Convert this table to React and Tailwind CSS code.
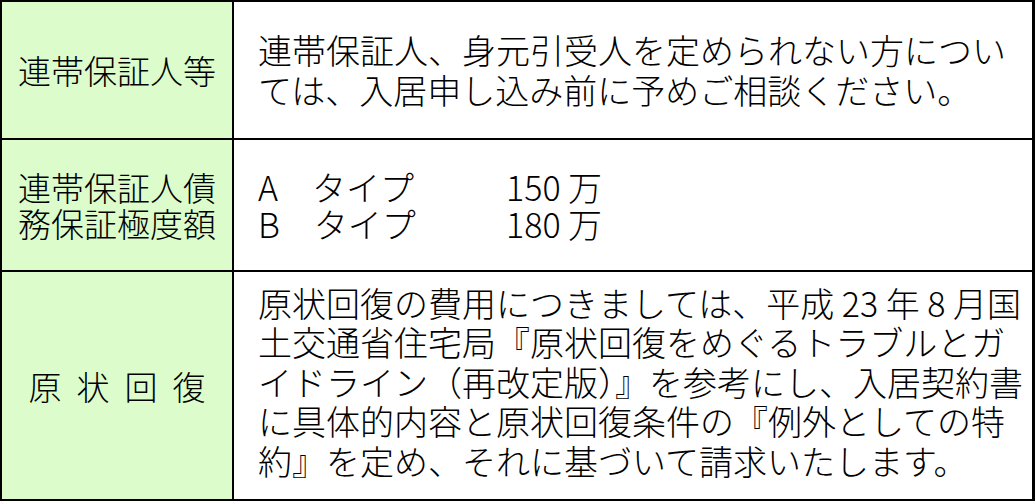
import React from "react";

const font = {
  fontFamily: '"Noto Sans CJK JP", "Noto Sans", sans-serif',
};

const Label = ({ children, className = "" }) => (
  <div
    className={`flex items-center justify-center bg-[#dcfccc] border-r-2 border-black text-[33px] font-light leading-[36px] text-black text-center ${className}`}
  >
    {children}
  </div>
);

const App = () => {
  return (
    <div
      className="w-[1035px] h-[501px] bg-white border-t-2 border-l-2 border-b-2 border-r-[3px] border-black flex flex-col"
      style={font}
    >
      {/* row 1 */}
      <div className="flex h-[138px] border-b-2 border-black">
        <Label className="w-[232px]">連帯保証人等</Label>
        <div className="flex-1 flex items-center pl-6 text-[34px] font-light leading-[40px] text-black whitespace-nowrap">
          <p>
            連帯保証人、身元引受人を定められない方につい
            <br />
            ては、入居申し込み前に予めご相談ください。
          </p>
        </div>
      </div>

      {/* row 2 */}
      <div className="flex h-[132px] border-b-2 border-black">
        <Label className="w-[232px]">
          <p>
            連帯保証人債
            <br />
            務保証極度額
          </p>
        </Label>
        <div className="flex-1 flex items-center pl-6 text-[34px] font-light leading-[37px] text-black whitespace-nowrap">
          <div className="grid grid-cols-[248px_auto]">
            <span>A　タイプ</span>
            <span>150 万</span>
            <span>B　タイプ</span>
            <span>180 万</span>
          </div>
        </div>
      </div>

      {/* row 3 */}
      <div className="flex flex-1">
        <Label className="w-[232px]">
          <span className="tracking-[15px] pl-[15px]">原状回復</span>
        </Label>
        <div className="flex-1 flex items-center pl-6 pb-2 text-[34px] font-light leading-[39.5px] text-black whitespace-nowrap">
          <p>
            原状回復の費用につきましては、平成 23 年 8 月国
            <br />
            土交通省住宅局『原状回復をめぐるトラブルとガ
            <br />
            イドライン（再改定版）』を参考にし、入居契約書
            <br />
            に具体的内容と原状回復条件の『例外としての特
            <br />
            約』を定め、それに基づいて請求いたします。
          </p>
        </div>
      </div>
    </div>
  );
};

export default App;
